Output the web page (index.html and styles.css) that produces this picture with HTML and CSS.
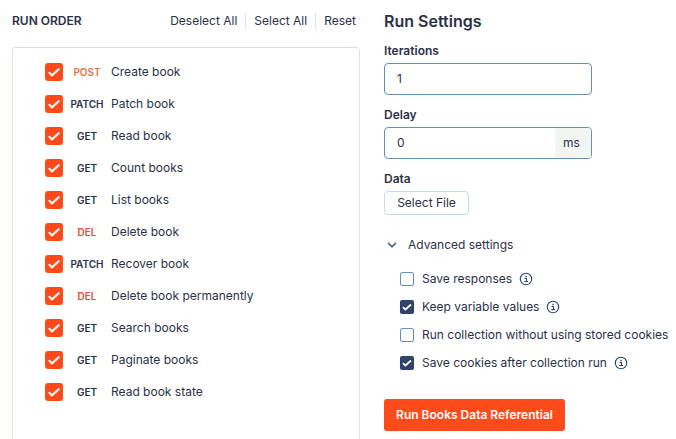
FILE: index.html
```html
<!DOCTYPE html>
<html lang="en">
<head>
<meta charset="utf-8">
<title>Collection runner</title>
<link rel="stylesheet" href="styles.css">
</head>
<body>
<svg class="defs" aria-hidden="true">
  <symbol id="check" viewBox="0 0 18 18"><path d="M3.8 9.2 7 12.2 14.2 5.8" fill="none" stroke="currentColor" stroke-width="2.2"/></symbol>
  <symbol id="info" viewBox="0 0 14 14"><circle cx="7" cy="7" r="5.7" fill="none" stroke="currentColor" stroke-width="1.1"/><path d="M5.5 6.5H7.5V9.5M5.2 9.5H9" fill="none" stroke="currentColor" stroke-width="1.1"/><path d="M6.4 3.8h1.4v1.4H6.4z" fill="currentColor"/></symbol>
</svg>
<main class="runner">
  <section class="order">
    <header class="order-head">
      <h2 class="order-title">RUN ORDER</h2>
      <nav class="actions"><a class="action">Deselect All</a><a class="action">Select All</a><a class="action">Reset</a></nav>
    </header>
    <ul class="requests">
      <li class="request"><span class="tick"><svg><use href="#check"/></svg></span><span class="method post">POST</span><span class="name">Create book</span></li>
      <li class="request"><span class="tick"><svg><use href="#check"/></svg></span><span class="method">PATCH</span><span class="name">Patch book</span></li>
      <li class="request"><span class="tick"><svg><use href="#check"/></svg></span><span class="method">GET</span><span class="name">Read book</span></li>
      <li class="request"><span class="tick"><svg><use href="#check"/></svg></span><span class="method">GET</span><span class="name">Count books</span></li>
      <li class="request"><span class="tick"><svg><use href="#check"/></svg></span><span class="method">GET</span><span class="name">List books</span></li>
      <li class="request"><span class="tick"><svg><use href="#check"/></svg></span><span class="method del">DEL</span><span class="name">Delete book</span></li>
      <li class="request"><span class="tick"><svg><use href="#check"/></svg></span><span class="method">PATCH</span><span class="name">Recover book</span></li>
      <li class="request"><span class="tick"><svg><use href="#check"/></svg></span><span class="method del">DEL</span><span class="name">Delete book permanently</span></li>
      <li class="request"><span class="tick"><svg><use href="#check"/></svg></span><span class="method">GET</span><span class="name">Search books</span></li>
      <li class="request"><span class="tick"><svg><use href="#check"/></svg></span><span class="method">GET</span><span class="name">Paginate books</span></li>
      <li class="request"><span class="tick"><svg><use href="#check"/></svg></span><span class="method">GET</span><span class="name">Read book state</span></li>
    </ul>
  </section>
  <section class="settings">
    <h1 class="settings-title">Run Settings</h1>
    <div class="label">Iterations</div>
    <div class="field"><span class="value">1</span></div>
    <div class="label">Delay</div>
    <div class="field"><span class="value">0</span><span class="unit">ms</span></div>
    <div class="label">Data</div>
    <button class="file">Select File</button>
    <div class="advanced"><svg class="chevron" viewBox="0 0 10 6"><path d="M1 1 5 4.8 9 1" fill="none" stroke="currentColor" stroke-width="1.2"/></svg>Advanced settings</div>
    <ul class="options">
      <li class="option"><span class="box"></span>Save responses<svg class="info"><use href="#info"/></svg></li>
      <li class="option"><span class="box on"><svg><use href="#check"/></svg></span>Keep variable values<svg class="info"><use href="#info"/></svg></li>
      <li class="option"><span class="box"></span>Run collection without using stored cookies</li>
      <li class="option"><span class="box on"><svg><use href="#check"/></svg></span>Save cookies after collection run<svg class="info"><use href="#info"/></svg></li>
    </ul>
    <button class="run">Run Books Data Referential</button>
  </section>
</main>
</body>
</html>
```
FILE: styles.css
```css
* { box-sizing: border-box; }
body {
  margin: 0;
  background: #fff;
  color: #2b3048;
  font: 12px/16px Inter, "Liberation Sans", sans-serif;
}
h1, h2, ul { margin: 0; padding: 0; }
ul { list-style: none; }
.defs { position: absolute; width: 0; height: 0; }
.runner {
  display: grid;
  grid-template-columns: 348px 1fr;
  column-gap: 24px;
  height: 439px;
  padding-left: 12px;
  overflow: hidden;
}
.order { display: flex; flex-direction: column; }
.order-head {
  display: flex;
  align-items: center;
  justify-content: space-between;
  height: 47px;
  padding: 0 4px 6px 0;
}
.order-title { font-size: 12px; font-weight: 600; line-height: 16px; }
.actions { display: flex; }
.action + .action { margin-left: 8px; padding-left: 8px; border-left: 1px solid #dfe3de; }
.requests {
  flex: 1;
  padding: 8px 0 0 32px;
  border: 1px solid #e4e6d4;
  border-top-color: #cfe2e2;
  border-bottom: 0;
  border-radius: 4px 4px 0 0;
}
.request { display: flex; align-items: center; height: 32px; }
.tick {
  width: 18px;
  height: 18px;
  border-radius: 3px;
  background: #ff4a1c;
  color: #fff;
}
.tick svg { display: block; width: 18px; height: 18px; }
.method {
  width: 48px;
  text-align: center;
  font-size: 10px;
  font-weight: 600;
}
.post { color: #e8743a; }
.del { color: #e8502c; }
.settings { display: flex; flex-direction: column; align-items: flex-start; padding-top: 11px; }
.settings-title { font-size: 16px; font-weight: 600; line-height: 20px; margin-bottom: 12px; }
.label { font-size: 12px; font-weight: 600; margin-bottom: 4px; }
.field {
  display: flex;
  width: 208px;
  height: 32px;
  margin-bottom: 12px;
  border: 1px solid #6491ba;
  border-radius: 4px;
  line-height: 30px;
  overflow: hidden;
}
.value { flex: 1; padding-left: 12px; }
.unit { width: 36px; padding-left: 8px; background: #f1f6f3; }
.file {
  width: 85px;
  height: 24px;
  padding: 0;
  border: 1px solid #c0dfe5;
  border-radius: 4px;
  background: #fff;
  color: inherit;
  font: inherit;
}
.advanced { display: flex; align-items: center; height: 16px; margin: 22px 0 12px 3px; }
.chevron { width: 10px; height: 6px; margin-right: 11px; color: #2a456c; }
.options { padding-left: 16px; }
.option { display: flex; align-items: center; height: 28px; white-space: nowrap; }
.box {
  width: 14px;
  height: 14px;
  margin-right: 8px;
  border: 1px solid #6491ba;
  border-radius: 2px;
}
.box.on { border: 0; background: #2f426b; color: #fff; }
.box svg { display: block; width: 14px; height: 14px; }
.info { width: 14px; height: 14px; margin-left: 7px; color: #2a456c; }
.run {
  width: 181px;
  height: 32px;
  margin-top: 22px;
  padding: 0;
  border: 0;
  border-radius: 3px;
  background: #ff4a1c;
  color: #fff;
  font: 600 12px/16px Inter, "Liberation Sans", sans-serif;
}
```
